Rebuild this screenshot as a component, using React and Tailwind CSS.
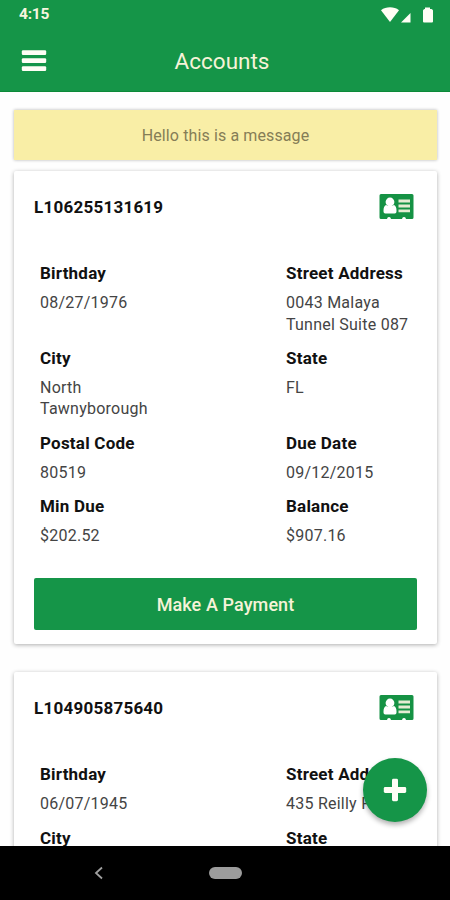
const ACCOUNTS = [
  {
    number: "L106255131619",
    fields: [
      ["Birthday", "08/27/1976"],
      ["Street Address", "0043 Malaya Tunnel Suite 087"],
      ["City", "North Tawnyborough"],
      ["State", "FL"],
      ["Postal Code", "80519"],
      ["Due Date", "09/12/2015"],
      ["Min Due", "$202.52"],
      ["Balance", "$907.16"],
    ],
  },
  {
    number: "L104905875640",
    fields: [
      ["Birthday", "06/07/1945"],
      ["Street Address", "435 Reilly F"],
      ["City", ""],
      ["State", ""],
    ],
  },
];

function StatusIcons() {
  return (
    <svg width="54" height="18" viewBox="0 0 54 18" fill="#fffef5">
      <path d="M0 4.200C5 0.400 13 0.400 18 4.200L9 16Z" />
      <path d="M29.500 7V16.500H20Z" />
      <path d="M44 3V1.600H49V3H50.500Q52 3.500 52 4.500V15.500Q52 16.500 51 16.500H43Q42 16.500 42 15.500V4.500Q42 3.500 43.500 3Z" />
    </svg>
  );
}

function MenuIcon() {
  return (
    <svg width="26" height="22" viewBox="0 0 26 22" fill="#fffef5">
      <rect x="0.800" y="0.300" width="24.400" height="4.600" rx="1.200" />
      <rect x="0.800" y="8.300" width="24.400" height="4.600" rx="1.200" />
      <rect x="0.800" y="16.300" width="24.400" height="4.600" rx="1.200" />
    </svg>
  );
}

function CardIcon() {
  return (
    <svg width="35" height="26" viewBox="0 0 35 26">
      <path
        fill="#159244"
        d="M2 0H33Q34.500 0 34.500 1.500V23.500Q34.500 25 33 25H26.800V24Q25 22 23.200 24V25H11.800V24Q10 22 8.200 24V25H2Q0.500 25 0.500 23.500V1.500Q0.500 0 2 0Z"
      />
      <circle cx="11" cy="8" r="4.400" fill="#fff" />
      <path
        fill="#fff"
        d="M7 11Q11 13 15 11Q17.500 12 17.500 16.500V17.500Q17.500 19.400 15.700 19.400H6.300Q4.500 19.400 4.500 17.500V16.500Q4.500 12 7 11Z"
      />
      <path d="M19.500 7H31M19.500 12H31M19.500 16.800H31" stroke="#e6ecd3" strokeWidth="2.800" />
    </svg>
  );
}

function PlusIcon() {
  return (
    <svg width="24" height="24" viewBox="0 0 24 24" fill="#fffef5">
      <rect x="9" y="0.800" width="6" height="22.400" rx="1.400" />
      <rect x="0.800" y="9" width="22.400" height="6" rx="1.400" />
    </svg>
  );
}

function Field({ label, value }) {
  return (
    <div className="pb-[13px] leading-[21.600px]">
      <div className="text-[17px] font-bold tracking-[0.220px] text-[#111]">{label}</div>
      <div className="mt-[7px] w-[130px] text-[16px] tracking-[0.240px] text-[#444]">{value}</div>
    </div>
  );
}

function AccountCard({ account }) {
  return (
    <section className="h-[473px] shrink-0 rounded-xs bg-white px-5 pt-[22px] shadow-[0_1px_4px_rgba(0,0,0,0.32)]">
      <div className="flex h-[27px] items-center justify-between pr-[3px]">
        <h2 className="pt-[2px] text-[17px] font-bold tracking-[0.240px] text-[#111]">{account.number}</h2>
        <CardIcon />
      </div>
      <div className="mt-[43px] grid h-[314px] grid-cols-[246px_1fr] content-start pt-[0.400px] pl-1.5">
        {account.fields.map(([label, value]) => (
          <Field key={label} label={label} value={value} />
        ))}
      </div>
      <button className="mt-px h-[52px] w-full rounded-xs bg-[#159548] pt-px text-lg font-medium tracking-[0.100px] text-[#f6f3d8]">
        Make A Payment
      </button>
    </section>
  );
}

export default function App() {
  return (
    <div className="relative flex h-[900px] w-[450px] flex-col overflow-hidden bg-[#fefefe] font-['Roboto',sans-serif]">
      <header className="h-[92px] shrink-0 border-b border-[#0c8a38] bg-[#159548]">
        <div className="flex h-[30px] items-center justify-between pr-[15px] pl-[19px]">
          <span className="text-[15.500px] font-bold tracking-[-0.200px] text-[#f8f6df]">4:15</span>
          <StatusIcons />
        </div>
        <div className="grid h-[62px] grid-cols-[1fr_auto_1fr] items-center pl-[21px]">
          <button className="justify-self-start">
            <MenuIcon />
          </button>
          <h1 className="pt-[2px] pr-[27px] text-[22.500px] text-[#f6f3d8]">Accounts</h1>
        </div>
      </header>

      <main className="flex min-h-0 flex-1 flex-col overflow-hidden pt-[18px] pr-[13px] pl-[14px]">
        <div className="flex h-[50px] shrink-0 items-center justify-center bg-[#f9eea6] pt-px text-base tracking-[0.120px] text-[#857d56] shadow-[0_0_3px_rgba(0,0,0,0.3)]">
          Hello this is a message
        </div>
        <div className="mt-[11px] flex flex-col gap-[28px]">
          {ACCOUNTS.map((account) => (
            <AccountCard key={account.number} account={account} />
          ))}
        </div>
      </main>

      <button className="absolute top-[758px] left-[363px] flex size-16 items-center justify-center rounded-full bg-[#159548] shadow-[0_3px_5px_rgba(0,0,0,0.3)]">
        <PlusIcon />
      </button>

      <nav className="flex h-[54px] shrink-0 items-center bg-black pl-[94px]">
        <svg width="9" height="14" viewBox="0 0 9 14" fill="none" stroke="#a0a0a0" strokeWidth="1.800">
          <path d="M8 1.500L2 7L8 12.500" />
        </svg>
        <div className="ml-[106px] h-3 w-[33px] rounded-full bg-[#9c9c9c]" />
      </nav>
    </div>
  );
}
